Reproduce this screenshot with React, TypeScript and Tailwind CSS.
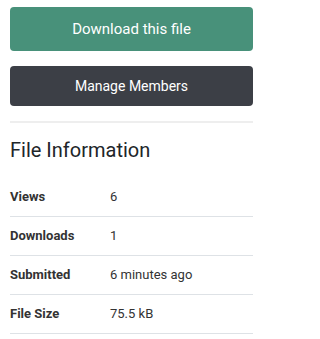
const rows = [
  { label: 'Views', value: '6' },
  { label: 'Downloads', value: '1' },
  { label: 'Submitted', value: '6 minutes ago' },
  { label: 'File Size', value: '75.5 kB' },
];

const App = () => {
  return (
    <div className="w-[263px] bg-white px-[10px] pt-[7px] font-['Roboto',sans-serif] text-[#212529]">
      <button
        type="button"
        className="flex h-[44px] w-full items-center justify-center rounded-[4px] bg-[#48917a] text-[15px] text-white"
      >
        Download this file
      </button>
      <button
        type="button"
        className="mt-[15px] flex h-[40px] w-full items-center justify-center rounded-[4px] bg-[#3c3f46] text-[14px] text-white"
      >
        Manage Members
      </button>
      <hr className="mt-[15px] border-t-2 border-[#eeeeee]" />
      <h2 className="mt-[15px] text-[20px] leading-[24px]">File Information</h2>
      <table className="mt-[15px] w-full text-[13px] text-[#333333]">
        <tbody>
          {rows.map((row) => (
            <tr key={row.label} className="h-[39px] border-b border-[#dee2e6]">
              <td className="w-[100px] font-bold">{row.label}</td>
              <td>{row.value}</td>
            </tr>
          ))}
        </tbody>
      </table>
    </div>
  );
};

export default App;
